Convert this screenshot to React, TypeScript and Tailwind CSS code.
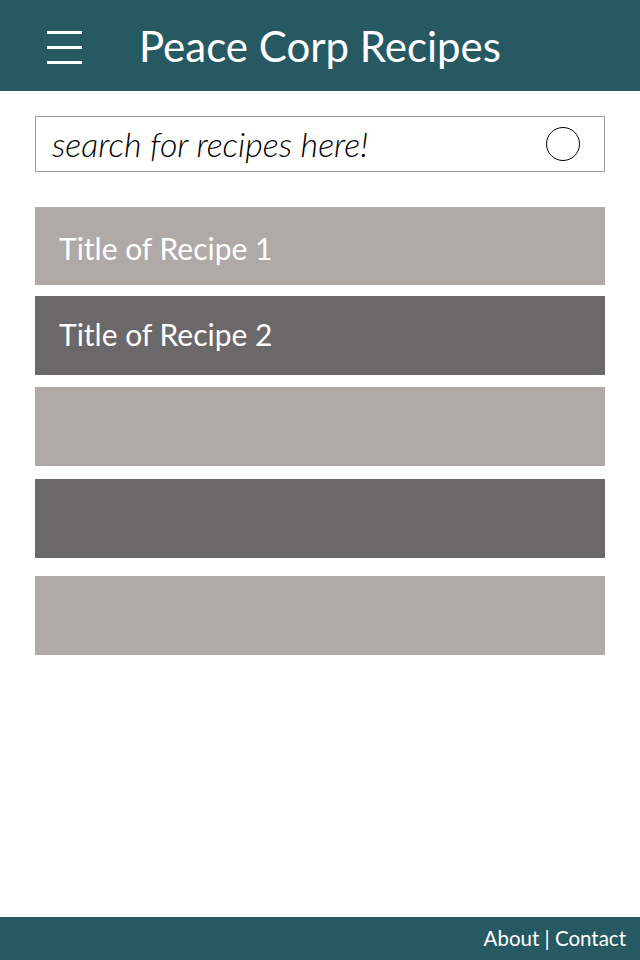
export default function App() {
  const bars = [
    { title: 'Title of Recipe 1', dark: false, cls: 'mt-0 h-[78px] pt-[3px]' },
    { title: 'Title of Recipe 2', dark: true, cls: 'mt-[11px] h-[79px] pb-[4px]' },
    { title: '', dark: false, cls: 'mt-[12px] h-[79px]' },
    { title: '', dark: true, cls: 'mt-[13px] h-[79px]' },
    { title: '', dark: false, cls: 'mt-[18px] h-[79px]' },
  ];

  return (
    <div className="flex h-[960px] w-[640px] flex-col bg-white font-['Lato',sans-serif]">
      <header className="flex h-[91px] items-center bg-[#265961]">
        <div className="ml-[47px] mt-[4px] flex w-[35px] flex-col gap-[12px]">
          <span className="h-[3px] bg-white" />
          <span className="h-[3px] bg-white" />
          <span className="h-[3px] bg-white" />
        </div>
        <h1 className="ml-[57px] text-[42px] leading-none text-white">Peace Corp Recipes</h1>
      </header>

      <main className="flex-1 px-[35px]">
        <div className="mt-[25px] flex h-[56px] items-center border border-[#9a9a9a] pl-[16px] pr-[24px]">
          <span className="flex-1 text-[34px] font-light italic leading-none text-black">search for recipes here!</span>
          <span className="h-[34px] w-[34px] rounded-full border-[1.5px] border-black" />
        </div>

        <div className="mt-[35px] flex flex-col">
          {bars.map((b, i) => (
            <div
              key={i}
              className={`${b.cls} flex items-center px-[24px] text-[30px] leading-none text-white ${
                b.dark ? 'bg-[#6b6869]' : 'bg-[#afa9a8]'
              }`}
            >
              {b.title}
            </div>
          ))}
        </div>
      </main>

      <footer className="flex h-[43px] items-center justify-end bg-[#265961] pr-[14px] text-[20.5px] text-white">
        About | Contact
      </footer>
    </div>
  );
}
